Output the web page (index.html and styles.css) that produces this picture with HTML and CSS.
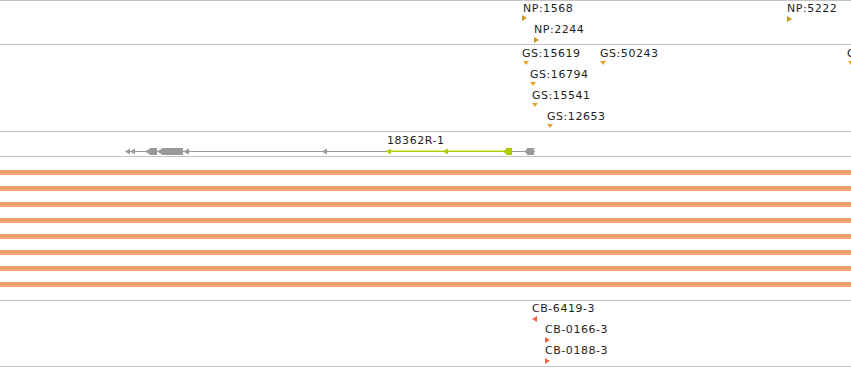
FILE: index.html
```html
<!DOCTYPE html>
<html>
<head>
	<meta charset="UTF-8">
	<title>Tracks</title>
	<link rel="stylesheet" href="styles.css">
</head>
<body>
	<div id="tracks">
		<div class="track t-np">
			<span class="lbl" style="left:523px;top:2px">NP:1568</span>
			<span class="mk mk-r np" style="left:522px;top:14px"></span>
			<span class="lbl" style="left:534px;top:23px">NP:2244</span>
			<span class="mk mk-r np" style="left:534px;top:36px"></span>
			<span class="lbl" style="left:787px;top:2px">NP:5222</span>
			<span class="mk mk-r np" style="left:787px;top:15px"></span>
		</div>

		<div class="track t-gs">
			<span class="lbl" style="left:522px;top:3px">GS:15619</span>
			<span class="mk mk-d gs" style="left:523px;top:16px"></span>
			<span class="lbl" style="left:600px;top:3px">GS:50243</span>
			<span class="mk mk-d gs" style="left:600px;top:16px"></span>
			<span class="lbl" style="left:530px;top:24px">GS:16794</span>
			<span class="mk mk-d gs" style="left:530px;top:37px"></span>
			<span class="lbl" style="left:532px;top:45px">GS:15541</span>
			<span class="mk mk-d gs" style="left:532px;top:58px"></span>
			<span class="lbl" style="left:547px;top:66px">GS:12653</span>
			<span class="mk mk-d gs" style="left:547px;top:79px"></span>
			<span class="lbl" style="left:847px;top:3px">GS:17320</span>
			<span class="mk mk-d gs" style="left:848px;top:16px"></span>
		</div>

		<div class="track t-gene">
			<span class="lbl" style="left:387px;top:3px">18362R-1</span>
			<svg class="gene" width="851" height="24" viewBox="0 0 851 24">
				<g fill="#999">
					<rect x="125" y="19" width="410" height="1"/>
					<polygon points="125,19.5 130,16.5 130,22.5"/>
					<polygon points="130,19.5 135,16.5 135,22.5"/>
					<polygon points="145,19.5 150,16.5 150,22.5"/>
					<rect x="150" y="16" width="7" height="7"/>
					<polygon points="157,19.5 162,16.5 162,22.5"/>
					<rect x="162" y="16" width="21" height="7"/>
					<polygon points="183,19.5 189,16.5 189,22.5"/>
					<polygon points="322,19.5 327,16.5 327,22.5"/>
					<polygon points="524,19.5 528,16.5 528,22.5"/>
					<rect x="527" y="16" width="7" height="7"/>
				</g>
				<g fill="#B0CC00">
					<rect x="386" y="18.6" width="122" height="1.4"/>
					<polygon points="386,19.5 391,16.5 391,22.5"/>
					<polygon points="443,19.5 448,16.5 448,22.5"/>
					<polygon points="503,19.5 507,16.5 507,22.5"/>
					<rect x="506" y="16" width="6" height="7"/>
				</g>
			</svg>
		</div>

		<div class="track t-bars">
			<div class="bar"></div>
			<div class="bar"></div>
			<div class="bar"></div>
			<div class="bar"></div>
			<div class="bar"></div>
			<div class="bar"></div>
			<div class="bar"></div>
			<div class="bar"></div>
		</div>

		<div class="track t-cb">
			<span class="lbl" style="left:532px;top:2px">CB-6419-3</span>
			<span class="mk mk-l cb" style="left:532px;top:15px"></span>
			<span class="lbl" style="left:545px;top:23px">CB-0166-3</span>
			<span class="mk mk-r cb" style="left:545px;top:36px"></span>
			<span class="lbl" style="left:545px;top:44px">CB-0188-3</span>
			<span class="mk mk-r cb" style="left:545px;top:57px"></span>
		</div>
	</div>
</body>
</html>
```

FILE: styles.css
```css
*
{
	margin: 0px;
	padding: 0px;
	box-sizing: content-box;
}
body
{
	background: #FFFFFF;
	font-family: "DejaVu Sans", sans-serif;
	font-size: 11px;
	color: #1E1E1E;
}
#tracks
{
	width: 851px;
	display: flex;
	flex-direction: column;
	border-bottom: 1px solid #C4C4C4;
}
.track
{
	position: relative;
	overflow: hidden;
	border-top: 1px solid #C4C4C4;
}
.t-np   { height: 43px; }
.t-gs   { height: 86px; }
.t-gene { height: 24px; }
.t-cb   { height: 65px; }

.t-bars
{
	height: 130px;
	padding-top: 13px;
	display: flex;
	flex-direction: column;
	gap: 11px;
}
.bar
{
	height: 5px;
	background: #F5A46D;
}

.lbl
{
	position: absolute;
	line-height: 12px;
	letter-spacing: 0.55px;
	white-space: nowrap;
}
.gene
{
	position: absolute;
	left: 0px;
	top: 0px;
	display: block;
}

.mk
{
	position: absolute;
	width: 0px;
	height: 0px;
}
.mk-r
{
	border-left: 5px solid currentColor;
	border-top: 3px solid transparent;
	border-bottom: 3px solid transparent;
}
.mk-l
{
	border-right: 5px solid currentColor;
	border-top: 3px solid transparent;
	border-bottom: 3px solid transparent;
}
.mk-d
{
	border-top: 4px solid currentColor;
	border-left: 3px solid transparent;
	border-right: 3px solid transparent;
}
.np { color: #CC961C; }
.gs { color: #EFA328; }
.cb { color: #F2664A; }
```
